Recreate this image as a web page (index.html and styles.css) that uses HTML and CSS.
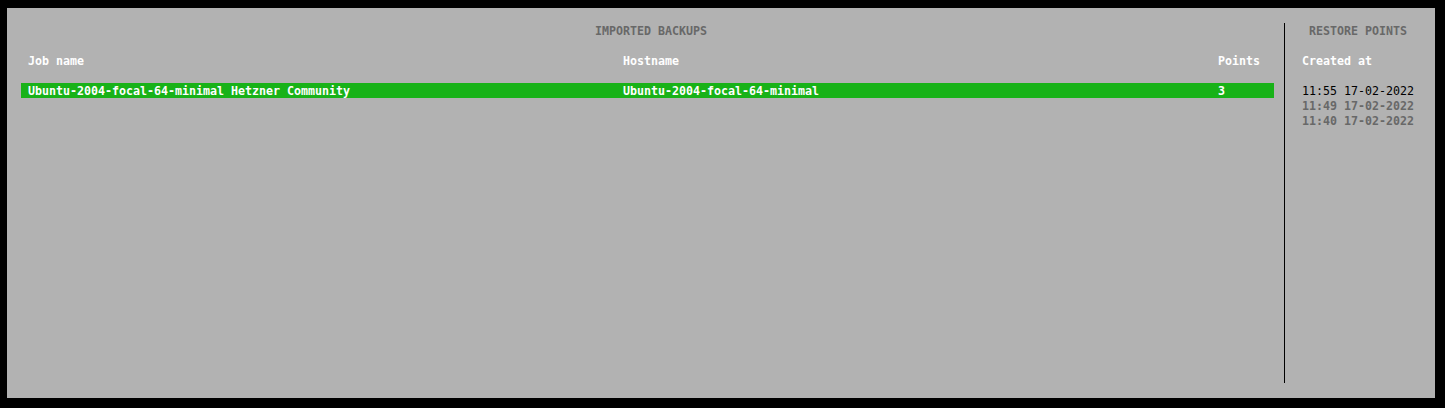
FILE: index.html
```html
<!DOCTYPE html>
<html>
<head>
<meta charset="utf-8">
<link rel="stylesheet" href="styles.css">
</head>
<body>
<div class="screen">
  <section class="pane backups">
    <div class="title">IMPORTED BACKUPS</div>
    <div class="blank"></div>
    <div class="row head">
      <span>Job name</span><span>Hostname</span><span>Points</span>
    </div>
    <div class="blank"></div>
    <div class="row selected">
      <span>Ubuntu-2004-focal-64-minimal Hetzner Community</span><span>Ubuntu-2004-focal-64-minimal</span><span>3</span>
    </div>
  </section>
  <section class="pane points">
    <div class="title">RESTORE POINTS</div>
    <div class="blank"></div>
    <div class="line head">Created at</div>
    <div class="blank"></div>
    <div class="line current">11:55 17-02-2022</div>
    <div class="line dim">11:49 17-02-2022</div>
    <div class="line dim">11:40 17-02-2022</div>
  </section>
</div>
</body>
</html>
```
FILE: styles.css
```css
html, body {
  margin: 0;
  padding: 0;
  background: #000;
}
body {
  font-family: "DejaVu Sans Mono", "Liberation Mono", monospace;
  font-size: 11.63px;
  font-weight: bold;
  line-height: 17px;
}
.screen {
  box-sizing: border-box;
  margin: 8px 0 0 7px;
  width: 1428px;
  height: 390px;
  background: #b2b2b2;
  padding: 15px 0;
  display: flex;
}
.pane {
  height: 360px;
}
.backups {
  box-sizing: border-box;
  width: 1278px;
  padding: 0 10px 0 14px;
  border-right: 1px solid #000;
}
.points {
  flex: 1;
  padding-left: 17px;
}
.title {
  height: 15px;
  color: #686868;
  text-align: center;
  white-space: pre;
}
.backups .title {
  padding-left: 7px;
}
.points .title {
  margin-left: -17px;
  padding-right: 4px;
}
.blank {
  height: 15px;
}
.row {
  display: grid;
  grid-template-columns: 595px 595px 1fr;
  height: 15px;
  overflow: visible;
  padding-left: 7px;
  color: #fff;
  white-space: pre;
}
.row.selected {
  background: #18b218;
}
.line {
  height: 15px;
  white-space: pre;
}
.line.head {
  color: #fff;
}
.line.current {
  color: #000;
  font-weight: normal;
}
.line.dim {
  color: #686868;
}
```
